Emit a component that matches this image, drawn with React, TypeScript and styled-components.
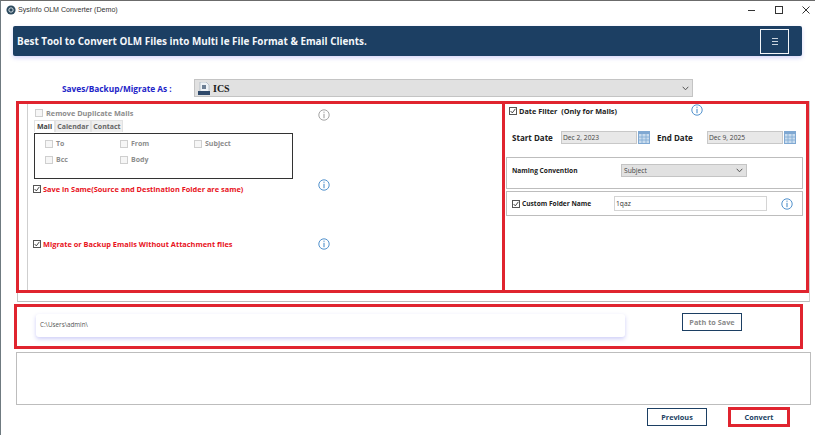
import React, { FC } from "react";
import styled, { createGlobalStyle } from "styled-components";

const GlobalStyle = createGlobalStyle`
  html, body { margin: 0; padding: 0; background: #fff; }
  body { font-family: "Open Sans", sans-serif; }
`;

const RED = "#e0242f";
const NAVY = "#1c3f63";
const UI_FONT = `"Open Sans", sans-serif`;

const Page = styled.div`
  position: relative;
  width: 815px;
  height: 435px;
  box-sizing: border-box;
  overflow: hidden;
  background: #fff;
  border-top: 1px solid #6b6b6b;
  border-left: 1px solid #6f7a80;
  display: flex;
  flex-direction: column;
`;

const TitleBar = styled.div`
  height: 25px;
  display: flex;
  align-items: center;
  padding: 0 0 8px 5px;
  box-sizing: border-box;
`;

const AppName = styled.span`
  margin-left: 2px;
  font: 7.1px "Liberation Sans", sans-serif;
  color: #333;
`;

const WindowButtons = styled.div`
  margin-left: auto;
  display: flex;
  gap: 17px;
  padding-right: 4px;
  align-items: center;
`;

const Banner = styled.div`
  margin-left: 12px;
  width: 789px;
  height: 30px;
  box-sizing: border-box;
  background: ${NAVY};
  border-radius: 2px;
  box-shadow: 0 2px 4px rgba(90, 90, 230, 0.25);
  display: flex;
  align-items: center;
  justify-content: space-between;
  padding: 0 13px 0 4px;
`;

const BannerTitle = styled.div`
  font: bold 9.9px ${UI_FONT};
  color: #f4f7fa;
  white-space: nowrap;
`;

const MenuButton = styled.div`
  width: 29px;
  height: 25px;
  box-sizing: border-box;
  border: 1px solid #f2f5f8;
  display: flex;
  flex-direction: column;
  align-items: center;
  justify-content: center;
  gap: 2px;
`;

const MenuLine = styled.span`
  width: 6px;
  height: 1px;
  background: #c9d3de;
`;

const FormatRow = styled.div`
  margin-top: 23px;
  height: 18px;
  display: flex;
  align-items: center;
`;

const FormatLabel = styled.div`
  width: 132px;
  margin-left: 61px;
  font: bold 8.3px ${UI_FONT};
  color: #1d24c8;
  white-space: nowrap;
`;

const FormatSelect = styled.div`
  width: 499px;
  height: 18px;
  box-sizing: border-box;
  background: #e1e1e1;
  border: 1px solid #c4c4c4;
  display: flex;
  align-items: center;
  padding: 0 3px 0 3px;
`;

const FormatValue = styled.span`
  margin-left: 3px;
  font: bold 10px "Liberation Serif", serif;
  color: #1a1a1a;
`;

const Chevron = styled.svg`
  margin-left: auto;
`;

const OptionsFrame = styled.div`
  margin: 4px 0 0 16px;
  width: 793px;
  height: 201px;
  box-sizing: border-box;
  border-left: 1px solid #c4c4c4;
  border-bottom: 1px solid #bdbdbd;
  border-right: 1px solid #d0d0d0;
  display: flex;
  align-items: flex-start;
`;

const LeftPanel = styled.div`
  margin-left: -2px;
  width: 489px;
  height: 192px;
  flex: none;
  box-sizing: border-box;
  border: 3px solid ${RED};
  padding-left: 8px;
`;

const LeftInner = styled.div`
  height: 100%;
  border-left: 1px solid #cfcfcf;
  padding-left: 5px;
  display: flex;
  flex-direction: column;
`;

const OptionRow = styled.div<{ $top: number; $indent?: number }>`
  margin-top: ${(p) => p.$top}px;
  margin-left: ${(p) => p.$indent ?? 0}px;
  width: ${(p) => 297 - (p.$indent ?? 0)}px;
  display: flex;
  align-items: center;
  height: 12px;
`;

const Label = styled.span<{ $tone?: "red" | "muted" | "dark"; $size?: number; $gap?: number }>`
  margin-left: ${(p) => p.$gap ?? 2}px;
  font: bold ${(p) => p.$size ?? 7.4}px ${UI_FONT};
  white-space: nowrap;
  color: ${(p) =>
    p.$tone === "red" ? "#e8121c" : p.$tone === "muted" ? "#8d8d8d" : "#222"};
`;

const InfoSlot = styled.span<{ $shift?: number }>`
  margin-left: auto;
  display: flex;
  transform: translateY(${(p) => p.$shift ?? 0}px);
`;

const BoxWrap = styled.span<{ $on: boolean }>`
  width: 8px;
  height: 8px;
  flex: none;
  box-sizing: border-box;
  border: 1px solid ${(p) => (p.$on ? "#555" : "#cfcfcf")};
  background: ${(p) => (p.$on ? "#fff" : "#f6f6f6")};
  display: flex;
`;

const Tabs = styled.div`
  margin: 1px 0 0 1px;
  height: 12px;
  display: flex;
`;

const Tab = styled.div<{ $active?: boolean; $width: number }>`
  width: ${(p) => p.$width}px;
  box-sizing: border-box;
  text-align: center;
  font: bold 7px/11px ${UI_FONT};
  color: ${(p) => (p.$active ? "#444" : "#666")};
  background: ${(p) => (p.$active ? "#fff" : "#efefef")};
  border: 1px solid #e2e2e2;
  border-bottom: none;
`;

const FieldsBox = styled.div`
  margin: 1px 0 0 1px;
  width: 259px;
  height: 46px;
  box-sizing: border-box;
  border: 1px solid #333;
  padding: 5px 0 0 10px;
  display: grid;
  grid-template-columns: 75px 74px 1fr;
  grid-template-rows: 9px 9px;
  row-gap: 7px;
`;

const Field = styled.div`
  display: flex;
  align-items: center;
  gap: 1px;
`;

const RightPanel = styled.div`
  margin-left: -3px;
  width: 307px;
  height: 192px;
  flex: none;
  box-sizing: border-box;
  border: 3px solid ${RED};
  display: flex;
  flex-direction: column;
`;

const DateFilterRow = styled.div`
  height: 12px;
  margin: 1px 0 0 4px;
  width: 194px;
  display: flex;
  align-items: center;
`;

const DateRow = styled.div`
  margin: 14px 0 0 7px;
  height: 13px;
  display: flex;
  align-items: center;
`;

const DateLabel = styled.span<{ $width: number }>`
  width: ${(p) => p.$width}px;
  font: bold 8px ${UI_FONT};
  color: #222;
  white-space: nowrap;
`;

const DateInput = styled.div`
  width: 76px;
  height: 13px;
  box-sizing: border-box;
  background: #e8e8e8;
  border: 1px solid #c8c8c8;
  padding-left: 1px;
  font: 6.7px/11px ${UI_FONT};
  color: #444;
`;

const CalendarIcon = styled.svg`
  margin: 0 7px 0 1px;
  flex: none;
`;

const GroupBox = styled.div<{ $height: number; $top: number }>`
  margin: ${(p) => p.$top}px 0 0 1px;
  width: 297px;
  height: ${(p) => p.$height}px;
  box-sizing: border-box;
  border: 1px solid #bdbdbd;
  display: flex;
  align-items: center;
  padding-left: 5px;
`;

const NamingRow = styled(GroupBox)`
  align-items: flex-start;
  padding-top: 6px;
`;

const NamingLabel = styled.span`
  width: 109px;
  font: bold 6.6px/13px ${UI_FONT};
  color: #222;
  white-space: nowrap;
`;

const NamingSelect = styled.div`
  width: 126px;
  height: 13px;
  box-sizing: border-box;
  background: #e1e1e1;
  border: 1px solid #c4c4c4;
  font: 6.7px/11px ${UI_FONT};
  color: #444;
  padding: 0 3px 0 2px;
  display: flex;
  align-items: center;
`;

const FolderLabel = styled(Label)`
  width: 92px;
`;

const FolderInput = styled.div`
  width: 153px;
  height: 15px;
  box-sizing: border-box;
  background: #fff;
  border: 1px solid #d4d4d4;
  padding-left: 1px;
  font: 6.7px/13px ${UI_FONT};
  color: #333;
`;

const FolderInfo = styled.span`
  margin-left: 14px;
  display: flex;
`;

const PathBox = styled.div`
  margin: 2px 0 0 13px;
  width: 789px;
  height: 45px;
  box-sizing: border-box;
  border: 3px solid ${RED};
  padding: 7px 0 0 19px;
  display: flex;
  align-items: flex-start;
`;

const PathInput = styled.div`
  width: 589px;
  height: 23px;
  box-sizing: border-box;
  background: #fff;
  border-radius: 3px;
  box-shadow: 0 2px 4px rgba(90, 90, 230, 0.3);
  padding-left: 4px;
  font: 6.3px/22px ${UI_FONT};
  color: #555;
`;

const OutlineButton = styled.div<{ $width: number; $muted?: boolean }>`
  width: ${(p) => p.$width}px;
  height: 18px;
  box-sizing: border-box;
  border: 1px solid ${NAVY};
  display: flex;
  align-items: center;
  justify-content: center;
  font: bold 7.3px ${UI_FONT};
  color: ${(p) => (p.$muted ? "#8a8a8a" : NAVY)};
  background: #fff;
`;

const PathButtonSlot = styled.div`
  margin: -1px 0 0 57px;
`;

const LogBox = styled.div`
  margin: 3px 0 0 15px;
  width: 795px;
  height: 53px;
  box-sizing: border-box;
  border: 1px solid #bdbdbd;
`;

const Footer = styled.div`
  margin: 2px 0 0 646px;
  display: flex;
  align-items: center;
  gap: 21px;
`;

const ConvertFrame = styled.div`
  border: 3px solid ${RED};
  width: 62px;
  height: 20px;
  box-sizing: border-box;
  display: flex;
  align-items: center;
  justify-content: center;
  font: bold 7.3px ${UI_FONT};
  color: ${NAVY};
`;

const Check: FC<{ on?: boolean }> = ({ on = false }) => (
  <BoxWrap $on={on}>
    {on && (
      <svg width="6" height="6" viewBox="0 0 6 6">
        <path d="M0.6 3 L2.3 4.9 L5.4 0.8" fill="none" stroke="#333" strokeWidth="0.9" />
      </svg>
    )}
  </BoxWrap>
);

const InfoIcon: FC<{ muted?: boolean }> = ({ muted = false }) => {
  const color = muted ? "#9a9a9a" : "#3f86c6";
  return (
    <svg width="12" height="12" viewBox="0 0 12 12">
      <circle cx="6" cy="6" r="5.2" fill="none" stroke={color} strokeWidth="0.9" />
      <rect x="5.5" y="2.6" width="1" height="1.2" fill={color} />
      <rect x="5.5" y="4.8" width="1" height="4.4" fill={color} />
    </svg>
  );
};

const Calendar: FC = () => (
  <CalendarIcon width="12" height="13" viewBox="0 0 12 13">
    <rect x="0" y="0" width="12" height="13" fill="#7fa8d2" />
    <rect x="1" y="3" width="10" height="9" fill="#c9dcee" />
    <path d="M1 6h10M1 9h10M4 3v9M8 3v9" stroke="#7fa8d2" strokeWidth="0.8" />
  </CalendarIcon>
);

const SelectArrow: FC = () => (
  <Chevron width="7" height="5" viewBox="0 0 7 5">
    <path d="M0.7 0.8 L3.5 3.8 L6.3 0.8" fill="none" stroke="#555" strokeWidth="1" />
  </Chevron>
);

const App: FC = () => {
  return (
    <Page>
      <GlobalStyle />
      <TitleBar>
        <svg width="10" height="10" viewBox="0 0 11 11">
          <circle cx="5.5" cy="5.5" r="5" fill="#2c4a5e" />
          <circle cx="5.5" cy="5.5" r="2.4" fill="none" stroke="#dfe8ee" strokeWidth="1" />
        </svg>
        <AppName>SysInfo OLM Converter (Demo)</AppName>
        <WindowButtons>
          <svg width="10" height="10" viewBox="0 0 10 10">
            <path d="M1 5.5h7" stroke="#333" strokeWidth="1" />
          </svg>
          <svg width="10" height="10" viewBox="0 0 10 10">
            <rect x="1.5" y="1.5" width="7" height="7" fill="none" stroke="#333" strokeWidth="1" />
          </svg>
          <svg width="10" height="10" viewBox="0 0 10 10">
            <path d="M1.5 1.5l7 7M8.5 1.5l-7 7" stroke="#333" strokeWidth="1" />
          </svg>
        </WindowButtons>
      </TitleBar>

      <Banner>
        <BannerTitle>Best Tool to Convert OLM Files into Multi le File Format &amp; Email Clients.</BannerTitle>
        <MenuButton>
          <MenuLine />
          <MenuLine />
          <MenuLine />
        </MenuButton>
      </Banner>

      <FormatRow>
        <FormatLabel>Saves/Backup/Migrate As :</FormatLabel>
        <FormatSelect>
          <svg width="12" height="13" viewBox="0 0 12 13">
            <path d="M2 0h6l3 3v10H2z" fill="#eef2f6" stroke="#9aa7b5" strokeWidth="0.6" />
            <rect x="4" y="3" width="4" height="4" fill="#6d7f95" />
            <rect x="0" y="9" width="12" height="4" fill="#2f4a6b" />
          </svg>
          <FormatValue>ICS</FormatValue>
          <SelectArrow />
        </FormatSelect>
      </FormatRow>

      <OptionsFrame>
        <LeftPanel>
          <LeftInner>
            <OptionRow $top={3} $indent={2}>
              <Check />
              <Label $tone="muted" $size={7.3} $gap={3}>Remove Duplicate Mails</Label>
              <InfoSlot $shift={2}><InfoIcon muted /></InfoSlot>
            </OptionRow>
            <Tabs>
              <Tab $active $width={21}>Mail</Tab>
              <Tab $width={36}>Calendar</Tab>
              <Tab $width={32}>Contact</Tab>
            </Tabs>
            <FieldsBox>
              <Field><Check /><Label $tone="muted" $size={7}>To</Label></Field>
              <Field><Check /><Label $tone="muted" $size={7}>From</Label></Field>
              <Field><Check /><Label $tone="muted" $size={7}>Subject</Label></Field>
              <Field><Check /><Label $tone="muted" $size={7}>Bcc</Label></Field>
              <Field><Check /><Label $tone="muted" $size={7}>Body</Label></Field>
            </FieldsBox>
            <OptionRow $top={4}>
              <Check on />
              <Label $tone="red">Save in Same(Source and Destination Folder are same)</Label>
              <InfoSlot $shift={-4}><InfoIcon /></InfoSlot>
            </OptionRow>
            <OptionRow $top={43}>
              <Check on />
              <Label $tone="red">Migrate or Backup Emails Without Attachment files</Label>
              <InfoSlot><InfoIcon /></InfoSlot>
            </OptionRow>
          </LeftInner>
        </LeftPanel>

        <RightPanel>
          <DateFilterRow>
            <Check on />
            <Label $size={7.3}>Date Filter&nbsp; (Only for Mails)</Label>
            <InfoSlot $shift={-1}><InfoIcon /></InfoSlot>
          </DateFilterRow>
          <DateRow>
            <DateLabel $width={49}>Start Date</DateLabel>
            <DateInput>Dec 2, 2023</DateInput>
            <Calendar />
            <DateLabel $width={50}>End Date</DateLabel>
            <DateInput>Dec 9, 2025</DateInput>
            <Calendar />
          </DateRow>
          <NamingRow $height={32} $top={13}>
            <NamingLabel>Naming Convention</NamingLabel>
            <NamingSelect>
              Subject
              <SelectArrow />
            </NamingSelect>
          </NamingRow>
          <GroupBox $height={25} $top={2}>
            <Check on />
            <FolderLabel $size={6.6}>Custom Folder Name</FolderLabel>
            <FolderInput>1qaz</FolderInput>
            <FolderInfo><InfoIcon /></FolderInfo>
          </GroupBox>
        </RightPanel>
      </OptionsFrame>

      <PathBox>
        <PathInput>C:\Users\admin\</PathInput>
        <PathButtonSlot>
          <OutlineButton $width={60} $muted>Path to Save</OutlineButton>
        </PathButtonSlot>
      </PathBox>

      <LogBox />

      <Footer>
        <OutlineButton $width={60}>Previous</OutlineButton>
        <ConvertFrame>Convert</ConvertFrame>
      </Footer>
    </Page>
  );
};

export default App;
